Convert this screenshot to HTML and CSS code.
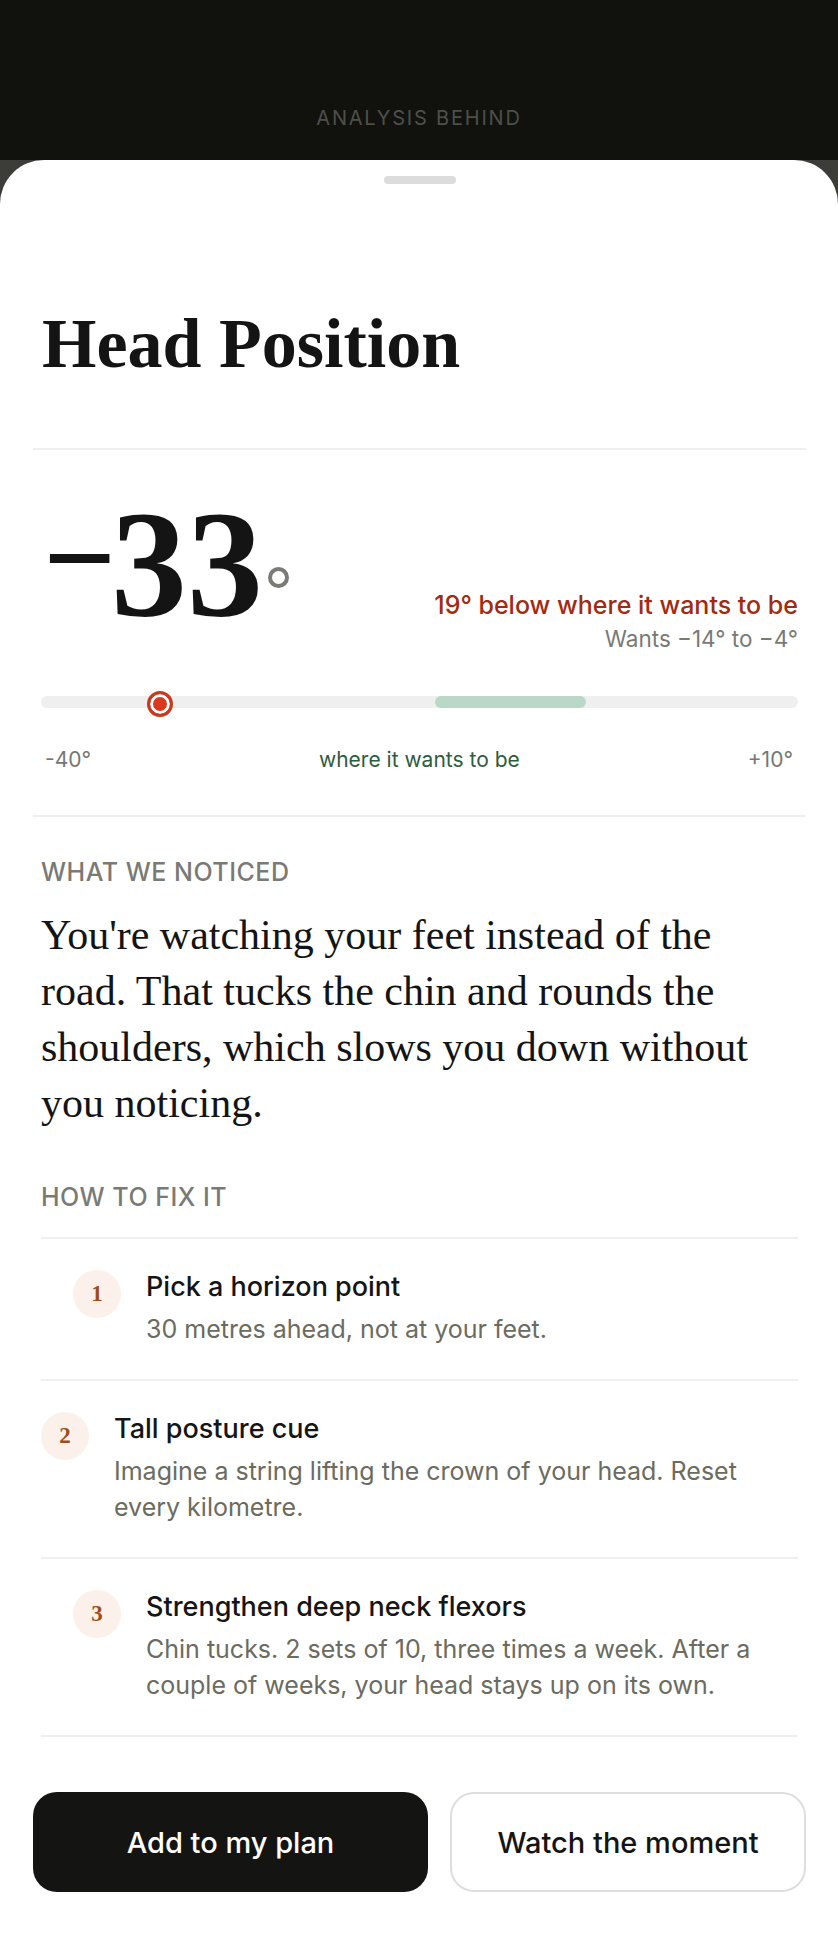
FILE: index.html
```html
<!DOCTYPE html>
<html lang="en">
<head>
<meta charset="utf-8">
<title>Head Position</title>
<link rel="stylesheet" href="styles.css">
</head>
<body>
<div class="backdrop">
  <span class="backdrop-label">ANALYSIS BEHIND</span>
</div>
<div class="sheet">
  <div class="handle"></div>
  <h1 class="title">Head Position</h1>
  <hr class="rule">
  <section class="hero">
    <div class="reading">
      <div class="value"><span class="minus">−</span>33<span class="deg"></span></div>
      <div class="verdict">
        <div class="verdict-off">19° below where it wants to be</div>
        <div class="verdict-wants">Wants −14° to −4°</div>
      </div>
    </div>
    <div class="track">
      <div class="zone" style="left:52%;width:20%"></div>
      <div class="marker" style="left:14%"></div>
    </div>
    <div class="scale">
      <span>-40°</span>
      <span class="scale-zone">where it wants to be</span>
      <span>+10°</span>
    </div>
  </section>
  <hr class="rule">
  <section class="notes">
    <h2 class="label">WHAT WE NOTICED</h2>
    <p class="observation">You're watching your feet instead of the road. That tucks the chin and rounds the shoulders, which slows you down without you noticing.</p>
    <h2 class="label label-fix">HOW TO FIX IT</h2>
    <ol class="steps">
      <li class="step step-indent">
        <span class="step-num">1</span>
        <div class="step-body">
          <div class="step-title">Pick a horizon point</div>
          <div class="step-desc">30 metres ahead, not at your feet.</div>
        </div>
      </li>
      <li class="step">
        <span class="step-num">2</span>
        <div class="step-body">
          <div class="step-title">Tall posture cue</div>
          <div class="step-desc">Imagine a string lifting the crown of your head. Reset every kilometre.</div>
        </div>
      </li>
      <li class="step step-indent">
        <span class="step-num">3</span>
        <div class="step-body">
          <div class="step-title">Strengthen deep neck flexors</div>
          <div class="step-desc">Chin tucks. 2 sets of 10, three times a week. After a couple of weeks, your head stays up on its own.</div>
        </div>
      </li>
    </ol>
  </section>
  <div class="actions">
    <button class="btn btn-primary">Add to my plan</button>
    <button class="btn btn-secondary">Watch the moment</button>
  </div>
</div>
</body>
</html>
```
FILE: styles.css
```css
* {
  box-sizing: border-box;
  margin: 0;
  padding: 0;
}

body {
  width: 838px;
  background: #3c3c38;
  font-family: Inter, "Noto Sans", sans-serif;
  color: #141414;
}

.backdrop {
  height: 160px;
  background: #11110d;
  display: flex;
  justify-content: center;
  align-items: flex-end;
  padding-bottom: 30px;
}

.backdrop-label {
  font-size: 20px;
  line-height: 24px;
  letter-spacing: 1.8px;
  color: #4f4f4a;
}

.sheet {
  background: #ffffff;
  border-radius: 44px 44px 0 0;
  padding: 16px 32px 48px 33px;
  min-height: 1780px;
}

.handle {
  width: 72px;
  height: 8px;
  border-radius: 4px;
  background: #dcdcdc;
  margin: 0 auto;
}

.title {
  font-family: "Liberation Serif", serif;
  font-weight: 700;
  font-size: 70px;
  line-height: 70px;
  margin-top: 125px;
  padding: 0 9px;
  color: #141414;
}

.rule {
  border: none;
  height: 2px;
  background: #efefed;
}

.title + .rule {
  margin-top: 69px;
}

.hero {
  padding: 0 8px;
}

.reading {
  display: flex;
  justify-content: space-between;
  align-items: flex-end;
  margin-top: 39px;
}

.value {
  font-family: "Liberation Serif", serif;
  font-weight: 700;
  font-size: 152px;
  line-height: 152px;
  color: #141414;
  padding-left: 2px;
}

.minus {
  font-size: 128px;
  line-height: 0;
  vertical-align: 15px;
  margin-right: -5px;
}

.deg {
  display: inline-block;
  width: 21px;
  height: 21px;
  border: 4px solid #7b7b76;
  border-radius: 50%;
  vertical-align: 28px;
  margin-left: 5px;
}

.verdict {
  text-align: right;
  margin-bottom: -14px;
}

.verdict-off {
  font-size: 25px;
  line-height: 33px;
  font-weight: 500;
  color: #a22a10;
}

.verdict-wants {
  font-size: 22.5px;
  line-height: 33px;
  color: #7a7a75;
}

.track {
  position: relative;
  height: 12px;
  border-radius: 6px;
  background: #efefef;
  margin-top: 55px;
}

.zone {
  position: absolute;
  top: 0;
  bottom: 0;
  border-radius: 6px;
  background: #b9d8c8;
}

.marker {
  position: absolute;
  top: -5px;
  width: 26px;
  height: 26px;
  border-radius: 50%;
  border: 3px solid #c9391f;
  background: #d93a1f;
  box-shadow: inset 0 0 0 3px #ffffff;
}

.scale {
  display: flex;
  justify-content: space-between;
  margin-top: 40px;
  padding: 0 5px 0 4px;
  font-size: 21px;
  line-height: 24px;
  color: #777772;
}

.scale-zone {
  color: #2e5c3d;
}

.hero + .rule {
  margin-top: 43px;
}

.notes {
  padding: 0 8px;
}

.label {
  font-size: 25px;
  line-height: 30px;
  font-weight: 500;
  letter-spacing: 0.5px;
  color: #7a7a75;
  margin-top: 40px;
}

.observation {
  font-family: "Liberation Serif", serif;
  font-size: 42px;
  line-height: 56px;
  color: #141414;
  max-width: 730px;
  margin-top: 20px;
}

.label-fix {
  margin-top: 51px;
}

.steps {
  list-style: none;
  margin-top: 25px;
  border-bottom: 2px solid #efefed;
}

.step {
  display: flex;
  align-items: flex-start;
  gap: 25px;
  border-top: 2px solid #efefed;
  padding: 31px 0 32px 0;
}

.step-indent {
  padding-left: 32px;
}

.step-num {
  flex: none;
  width: 48px;
  height: 48px;
  border-radius: 50%;
  background: #fcf1ea;
  color: #9c4d1c;
  font-family: "Liberation Serif", serif;
  font-weight: 700;
  font-size: 23px;
  display: flex;
  align-items: center;
  justify-content: center;
}

.step-body {
  margin-top: 1px;
}

.step-title {
  font-size: 27px;
  line-height: 32px;
  font-weight: 500;
  color: #151515;
}

.step-desc {
  font-size: 25px;
  line-height: 36px;
  color: #6b6b60;
  margin-top: 8px;
  max-width: 650px;
}

.actions {
  display: grid;
  grid-template-columns: 395px 356px;
  gap: 22px;
  margin-top: 55px;
}

.btn {
  height: 100px;
  border-radius: 24px;
  font-family: Inter, "Noto Sans", sans-serif;
  font-size: 29px;
  font-weight: 500;
  cursor: pointer;
}

.btn-primary {
  background: #141412;
  color: #ffffff;
  border: none;
}

.btn-secondary {
  background: #ffffff;
  color: #141414;
  border: 2px solid #dedede;
}
```
